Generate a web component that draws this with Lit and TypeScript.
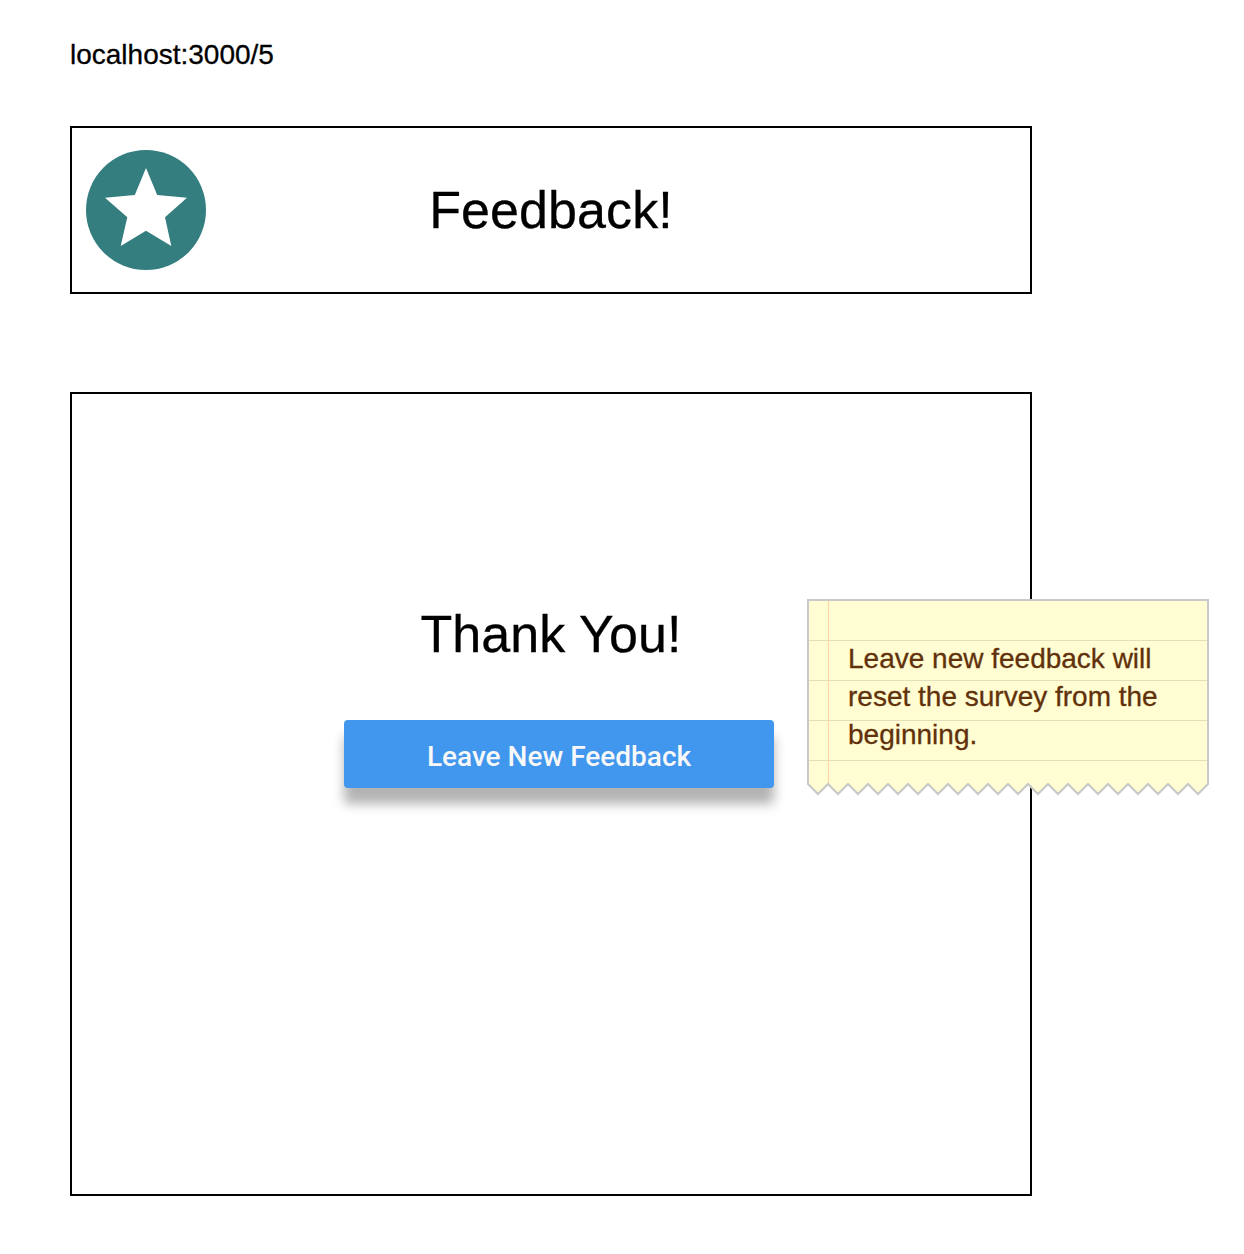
import { LitElement, html, css, svg } from "lit";
import { customElement } from "lit/decorators.js";

// Outline of the note: straight top and sides, zigzag torn bottom edge.
const NOTE_WIDTH = 400;
const TEAR_TOP = 185;
const TEAR_STEP = 10;

function noteOutline(): string {
  const points = ["1,1", `${NOTE_WIDTH + 1},1`];
  for (let i = NOTE_WIDTH / TEAR_STEP; i >= 0; i--) {
    points.push(`${1 + i * TEAR_STEP},${TEAR_TOP + (i % 2 ? TEAR_STEP : 0)}`);
  }
  return points.join(" ");
}

@customElement("star-badge")
export class StarBadge extends LitElement {
  static styles = css`
    :host { display: block; width: 120px; height: 120px; }
    .badge { display: block; }
  `;
  render() {
    return html`<svg class="badge" width="120" height="120" viewBox="0 0 120 120">
      <circle cx="60" cy="60" r="60" fill="#347e7f" />
      <path fill="#fff" d="M60 18L71.2 45.1L101 47.7L79 67.3L85.3 96L60 80.8L34.7 96L41.3 67.3L19 47.7L48.8 45.1Z" />
    </svg>`;
  }
}

@customElement("paper-note")
export class PaperNote extends LitElement {
  static styles = css`
    :host { display: grid; width: 402px; height: 197px; }
    .paper, .text { grid-area: 1 / 1; }
    .paper { display: block; }
    .text {
      margin: 0;
      padding: 41px 40px 0 41px;
      font: 28px/38px "Liberation Sans", Arial, sans-serif;
      -webkit-text-stroke: 0.3px currentColor;
      color: #61310b;
    }
  `;
  render() {
    return html`
      <svg class="paper" width="402" height="197" viewBox="0 0 402 197">
        <polygon points=${noteOutline()} fill="#fffdd1" />
        ${[41, 81, 121, 161].map(
          (y) => svg`<rect x="2" y=${y} width="398" height="1" fill="#e3dfba" />`,
        )}
        <rect x="21" y="2" width="1" height="183" fill="#ffd1a4" />
        <polygon points=${noteOutline()} fill="none" stroke="#c9c9c9" stroke-width="2" />
      </svg>
      <p class="text">Leave new feedback will<br />reset the survey from the<br />beginning.</p>
    `;
  }
}

@customElement("app-root")
export class AppRoot extends LitElement {
  static styles = css`
    :host {
      display: block;
      min-height: 1254px;
      box-sizing: border-box;
      padding: 39px 0 0 70px;
      background: #fff;
      color: #000;
      font-family: "Liberation Sans", Arial, sans-serif;
      -webkit-text-stroke: 0.3px currentColor;
    }
    .url { font-size: 28px; line-height: 32px; height: 87px; }
    .header, .panel {
      box-sizing: border-box;
      width: 962px;
      border: 2px solid #000;
    }
    .header {
      display: grid;
      grid-template-columns: 120px 1fr 120px;
      align-items: center;
      height: 168px;
      padding: 0 14px;
      margin-bottom: 98px;
    }
    .title {
      margin: 0;
      font-size: 52px;
      font-weight: 400;
      line-height: 60px;
      letter-spacing: 0.1px;
      text-align: center;
    }
    .panel {
      position: relative;
      display: flex;
      flex-direction: column;
      align-items: center;
      height: 804px;
      padding-top: 210px;
    }
    .action {
      width: 430px;
      height: 68px;
      margin: 56px 0 0 16px;
      padding: 6px 0 0;
      border: 0;
      border-radius: 4px;
      background: #4196ee;
      box-shadow: 0 16px 12px rgba(0, 0, 0, 0.3);
      color: #f8f8f8;
      font: 500 28px/32px Roboto, sans-serif;
      -webkit-text-stroke: 0;
    }
    /* The note is pinned over the right edge of the panel. */
    .note { position: absolute; left: 735px; top: 205px; }
  `;
  render() {
    return html`
      <div class="url">localhost:3000/5</div>
      <header class="header">
        <star-badge></star-badge>
        <h1 class="title">Feedback!</h1>
      </header>
      <main class="panel">
        <h2 class="title">Thank You!</h2>
        <button class="action">Leave New Feedback</button>
        <paper-note class="note"></paper-note>
      </main>
    `;
  }
}
